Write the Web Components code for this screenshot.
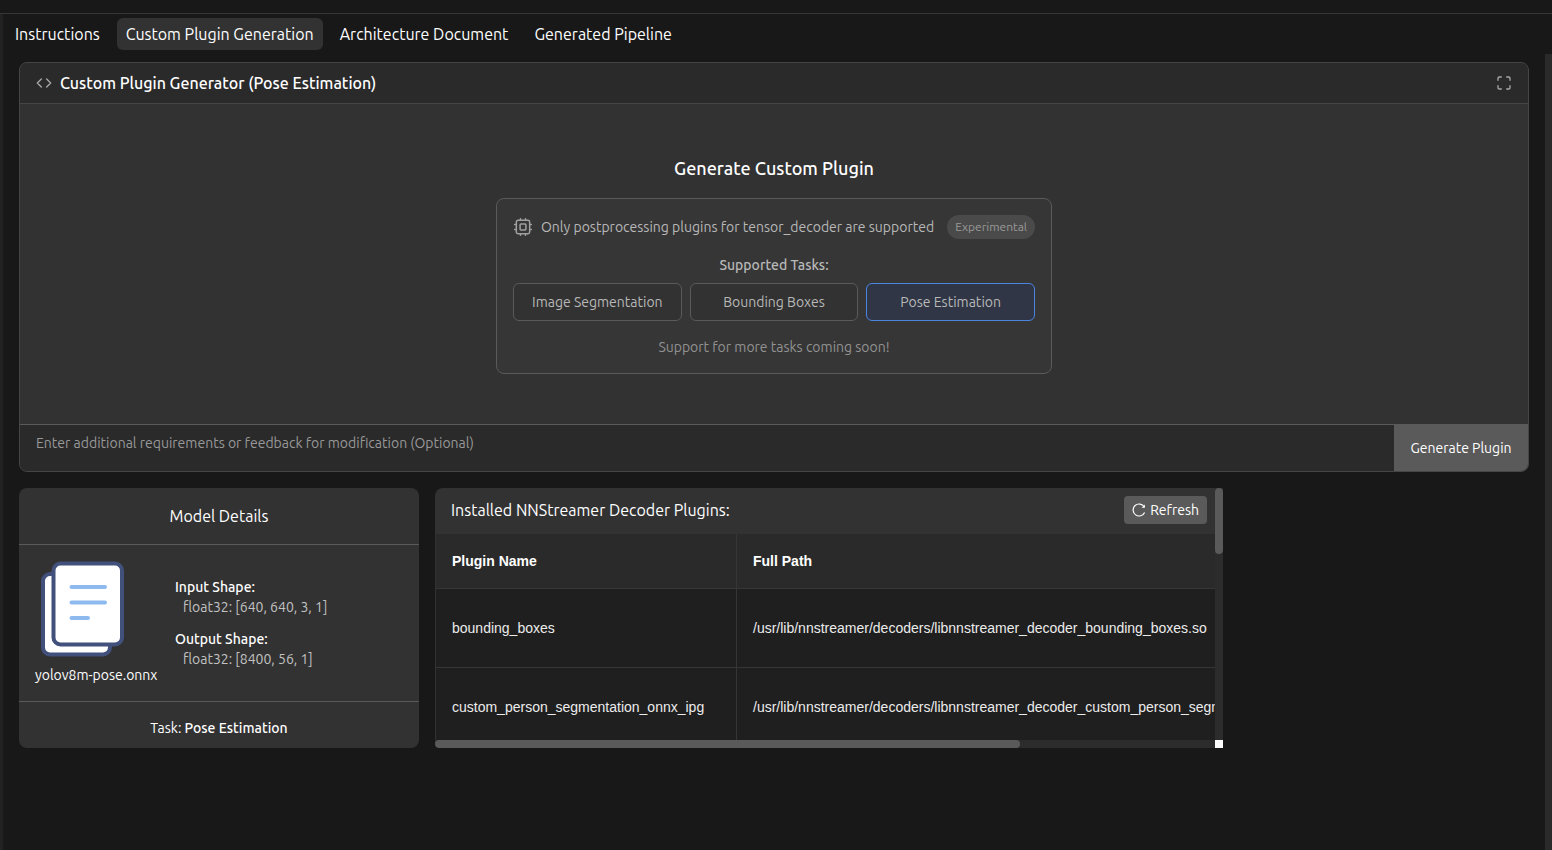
<!DOCTYPE html>
<html lang="en">
<head>
<meta charset="utf-8">
<title>Custom Plugin Generation</title>
<style>
  :root {
    --page: #181818;
    --surface: #323232;
    --bar: #2a2a2a;
    --line: #454545;
    --rule: #5a5a5a;
    --raised: #5a5a5a;
    --thumb: #5a5a5a;
  }
  body {
    margin: 0;
    background: var(--page);
    color: #fff;
    font: 16px/24px Ubuntu, "Noto Sans", sans-serif;
  }
</style>
</head>
<body>
<plugin-app></plugin-app>

<script>
const sheet = (css) => `<style>*{box-sizing:border-box}:host{box-sizing:border-box}button,textarea{font:inherit;color:inherit;border:0;margin:0;padding:0;background:none}button{cursor:pointer}h1,h2,p,dl,dd{margin:0;font:inherit}svg{display:block;flex:none}${css}</style>`;
const define = (name, css, html) => customElements.define(name, class extends HTMLElement {
  constructor() {
    super();
    const t = document.createElement('template');
    t.innerHTML = sheet(css) + html;
    this.attachShadow({ mode: 'open' }).append(t.content.cloneNode(true));
  }
});

define('plugin-tabs', `
  :host { display: block; padding: 4px 3px; }
  nav { display: flex; gap: 8px; }
  button { height: 32px; padding: 0 9px; border-radius: 6px; white-space: nowrap; }
  button[aria-current] { background: var(--surface); }
`, `
  <nav aria-label="Sections">
    <button type="button">Instructions</button>
    <button type="button" aria-current="page">Custom Plugin Generation</button>
    <button type="button">Architecture Document</button>
    <button type="button">Generated Pipeline</button>
  </nav>
`);

define('task-picker', `
  :host { display: flex; flex-direction: column; gap: 16px; width: 556px; max-width: 100%; padding: 16px;
    border: 1px solid var(--rule); border-radius: 8px; background: #363636;
    color: #b8b8b8; font-size: 14px; line-height: 20px; text-align: center; }
  .note { display: flex; align-items: center; gap: 8px; height: 24px; white-space: nowrap; }
  .note p { flex: 1; text-align: left; }
  .badge { padding: 0 8px; border-radius: 12px; background: #4a4a4a; color: #999; font-size: 12px; line-height: 24px; }
  h2 { font-weight: 500; margin-bottom: 8px; }
  .tasks { display: grid; grid-template-columns: repeat(3, 1fr); gap: 8px; }
  .tasks button { height: 38px; border: 1px solid var(--rule); border-radius: 6px; background: #323232; }
  .tasks button[aria-pressed=true] { border-color: #4a86e0; background: #303645; }
  .soon { color: #929292; }
`, `
  <div class="note">
    <svg width="20" height="20" viewBox="0 0 24 24" fill="none" stroke="#a0a0a0" stroke-width="1.8" stroke-linecap="round" stroke-linejoin="round" aria-hidden="true">
      <rect x="4" y="4" width="16" height="16" rx="2"/><rect x="8.5" y="8.5" width="7" height="7" rx="1"/>
      <path d="M15 2v2M15 20v2M2 15h2M2 9h2M20 15h2M20 9h2M9 2v2M9 20v2"/>
    </svg>
    <p>Only postprocessing plugins for tensor_decoder are supported</p>
    <span class="badge">Experimental</span>
  </div>
  <div>
    <h2>Supported Tasks:</h2>
    <div class="tasks">
      <button type="button" aria-pressed="false">Image Segmentation</button>
      <button type="button" aria-pressed="false">Bounding Boxes</button>
      <button type="button" aria-pressed="true">Pose Estimation</button>
    </div>
  </div>
  <p class="soon">Support for more tasks coming soon!</p>
`);

define('plugin-generator', `
  :host { display: block; border: 1px solid var(--line); border-radius: 8px; overflow: hidden; background: var(--surface); }
  header { display: flex; align-items: center; gap: 8px; height: 41px; padding: 0 16px; background: var(--bar); border-bottom: 1px solid var(--line); }
  header h1 { flex: 1; font-weight: 500; }
  .stage { display: flex; flex-direction: column; align-items: center; justify-content: center; gap: 16px; padding: 50px 16px; }
  .stage h2 { font-size: 18px; line-height: 28px; font-weight: 500; }
  form { display: flex; border-top: 1px solid var(--rule); background: var(--bar); font-size: 14px; line-height: 20px; }
  textarea { flex: 1; display: block; height: 46px; padding: 8px 16px; resize: none; outline: 0; overflow: hidden; }
  textarea::placeholder { color: #989898; opacity: 1; }
  form button { min-width: 134px; padding: 0 16px; background: var(--raised); color: #fff; }
`, `
  <header>
    <svg width="16" height="16" viewBox="0 0 24 24" fill="none" stroke="#a8a8a8" stroke-width="2" stroke-linecap="round" stroke-linejoin="round" aria-hidden="true"><path d="m16 18 6-6-6-6M8 6l-6 6 6 6"/></svg>
    <h1>Custom Plugin Generator (Pose Estimation)</h1>
    <button type="button" aria-label="Full screen">
      <svg width="16" height="16" viewBox="0 0 24 24" fill="none" stroke="#a8a8a8" stroke-width="2" stroke-linecap="round" stroke-linejoin="round"><path d="M8 3H5a2 2 0 0 0-2 2v3M21 8V5a2 2 0 0 0-2-2h-3M3 16v3a2 2 0 0 0 2 2h3M16 21h3a2 2 0 0 0 2-2v-3"/></svg>
    </button>
  </header>
  <div class="stage">
    <h2>Generate Custom Plugin</h2>
    <task-picker></task-picker>
  </div>
  <form>
    <textarea aria-label="Additional requirements" placeholder="Enter additional requirements or feedback for modification (Optional)"></textarea>
    <button type="button">Generate Plugin</button>
  </form>
`);

define('model-details', `
  :host { display: flex; flex-direction: column; border-radius: 8px; background: var(--surface); font-size: 14px; line-height: 20px; }
  h2 { padding: 16px; font-size: 16px; line-height: 24px; text-align: center; }
  .body { display: flex; align-items: center; gap: 16px; padding: 16px; border: solid var(--rule); border-width: 1px 0; }
  figure { min-width: 124px; margin: 0; }
  figcaption { margin-top: 8px; }
  dl { display: grid; gap: 12px; }
  dt { font-weight: 500; }
  dd { padding-left: 8px; color: #c2c2c2; }
  footer { padding: 16px 16px 0; text-align: center; }
  b { font-weight: 500; }
`, `
  <h2>Model Details</h2>
  <div class="body">
    <figure>
      <svg width="96" height="96" viewBox="0 0 96 96" fill="#fff" stroke="#42507c" stroke-width="4" aria-hidden="true">
        <rect x="8" y="13" width="67" height="80.500" rx="7"/>
        <rect x="18.500" y="2.500" width="68.500" height="81" rx="7"/>
        <path d="M36.500 26h33.500M36.500 41.500h33.500M36.500 57h16.500" stroke="#8fbaf0" stroke-linecap="round"/>
      </svg>
      <figcaption>yolov8m-pose.onnx</figcaption>
    </figure>
    <dl>
      <div><dt>Input Shape:</dt><dd>float32: [640, 640, 3, 1]</dd></div>
      <div><dt>Output Shape:</dt><dd>float32: [8400, 56, 1]</dd></div>
    </dl>
  </div>
  <footer>Task: <b>Pose Estimation</b></footer>
`);

define('installed-plugins', `
  :host { display: grid; grid-template: minmax(0, 1fr) 8px / minmax(0, 1fr) 8px; border-radius: 8px 0 0 4px; overflow: hidden; background: var(--surface); }
  .view { overflow: auto; scrollbar-width: none; }
  header { display: flex; align-items: center; justify-content: space-between; height: 46px; padding: 0 8px 2px 16px; }
  header button { display: flex; align-items: center; gap: 4px; height: 28px; padding: 0 8px; border-radius: 4px; background: var(--raised); font-size: 14px; line-height: 20px; }
  table { width: max-content; border-collapse: separate; border-spacing: 0; background: #1f1f1f; color: #ececec; border-left: 1px solid #323232;
    font: 14px/20px "Liberation Sans", Arial, sans-serif; }
  th, td { height: 79px; padding: 0 16px; text-align: left; border: solid #363636; border-width: 0 1px 1px 0; }
  th { height: 55px; background: var(--bar); color: #fff; }
  th:first-child { width: 301px; }
  .track { background: #2c2c2c; }
  .track i { display: block; border-radius: 4px; background: var(--thumb); }
  .y i { height: 26%; }
  .x i { width: 75%; height: 8px; }
  .corner { background: #fff; }
`, `
  <div class="view">
    <header>
      <h2>Installed NNStreamer Decoder Plugins:</h2>
      <button type="button">
        <svg width="14" height="14" viewBox="0 0 14 14" fill="none" stroke="#fff" stroke-width="1.200" aria-hidden="true"><path d="M12.600 9.400A6 6 0 1 1 12.300 4"/><path d="M12.900 1.600v3.200h-3.200z" fill="#fff" stroke="none"/></svg>
        Refresh
      </button>
    </header>
    <table>
      <thead><tr><th scope="col">Plugin Name</th><th scope="col">Full Path</th></tr></thead>
      <tbody>
        <tr><td>bounding_boxes</td><td>/usr/lib/nnstreamer/decoders/libnnstreamer_decoder_bounding_boxes.so</td></tr>
        <tr><td>custom_person_segmentation_onnx_ipg</td><td>/usr/lib/nnstreamer/decoders/libnnstreamer_decoder_custom_person_segmentation_onnx_ipg.so</td></tr>
      </tbody>
    </table>
  </div>
  <div class="track y"><i></i></div>
  <div class="track x"><i></i></div>
  <div class="corner"></div>
`);

define('plugin-app', `
  :host { display: flex; flex-direction: column; min-height: 100vh; }
  .top { height: 14px; border-bottom: 1px solid #363636; }
  .frame { flex: 1; display: flex; flex-direction: column; border-left: 3px solid #222; }
  .scroll { flex: 1; display: flex; }
  main { flex: 1; min-width: 0; padding: 8px 16px 0; }
  .lower { display: grid; grid-template: 260px / 400px minmax(0, 788px); gap: 16px; margin-top: 16px; }
  .gutter { width: 7px; background: #2a2a2a; }
`, `
  <div class="top"></div>
  <div class="frame">
    <plugin-tabs></plugin-tabs>
    <div class="scroll">
      <main>
        <plugin-generator></plugin-generator>
        <div class="lower">
          <model-details></model-details>
          <installed-plugins></installed-plugins>
        </div>
      </main>
      <div class="gutter"></div>
    </div>
  </div>
`);
</script>
</body>
</html>
